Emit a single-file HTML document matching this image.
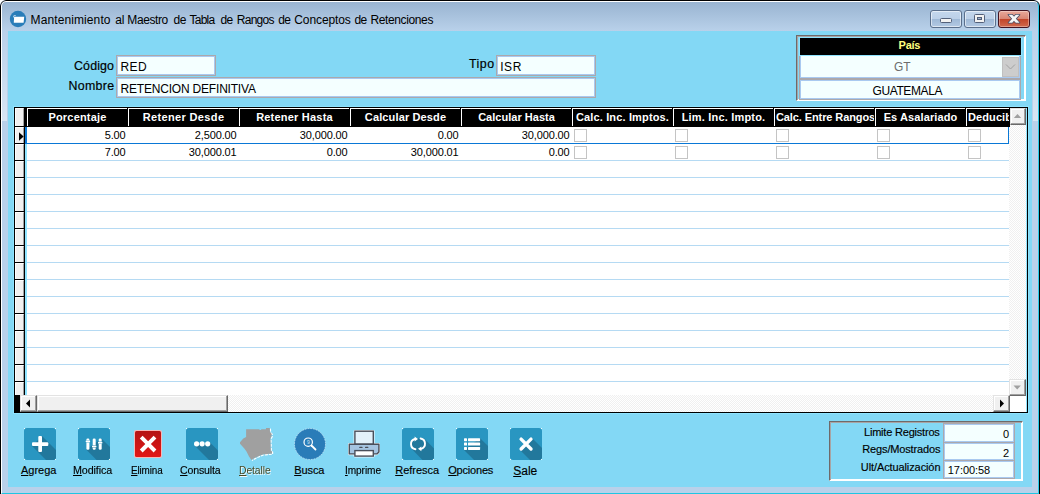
<!DOCTYPE html>
<html lang="es"><head><meta charset="utf-8"><title>Mantenimiento al Maestro de Tabla de Rangos de Conceptos de Retenciones</title>
<style>
*{box-sizing:border-box;margin:0;padding:0}
html,body{width:1040px;height:494px;overflow:hidden;background:#fff}
body{font-family:"Liberation Sans",sans-serif;font-size:12px;color:#000;position:relative}
.a{position:absolute}
.t{position:absolute;white-space:nowrap;line-height:16px;height:16px}
#win{left:0;top:0;width:1040px;height:495px;border-radius:6px 6px 0 0;background:#b9d1ea;overflow:hidden}
#win .ob{left:0;top:0;width:1040px;height:495px;border:1px solid #000;border-radius:6px 6px 0 0}
#win .hl{left:1px;top:1px;width:1038px;height:493px;border-radius:5px 5px 0 0;border-top:1px solid #fff;border-left:1px solid #fff;border-right:1px solid #2bcbe8;border-bottom:1px solid #1fc6e3}
#cap{left:2px;top:2px;width:1036px;height:29px;background:linear-gradient(#99b4d1,#b9d1ea)}
.side{top:31px;width:5px;height:90px;background:linear-gradient(rgba(255,255,255,0),rgba(255,255,255,.45))}
#title{left:0;top:12px;font-size:12px;color:#000}
#client{left:8px;top:31px;width:1024px;height:456px;background:#83d8f5}
.cb{top:10px;height:18px;width:32px;border:1px solid #5a6f8c;border-radius:3px;background:linear-gradient(#c4d7ed 0%,#bcd0e8 48%,#9fb9d7 52%,#b3c9e3 100%);box-shadow:inset 0 0 0 1px rgba(255,255,255,.55)}
.cb.x{border-color:#431422;background:linear-gradient(#e9a99b 0%,#d98775 48%,#c2452a 52%,#d0694e 100%);box-shadow:inset 0 0 0 1px rgba(255,255,255,.35)}
.fld{background:#f4ffff;border:1px solid #aba8ac;box-shadow:inset 0 0 0 1px #a9c9f0}
.l{font-size:12.4px;-webkit-text-stroke:.18px #000}
.k{-webkit-text-stroke:.15px #000}
.hd{top:108px;height:18px;background:#000;border-left:1px solid #fff;border-top:1px solid #fff;overflow:hidden}
.hd span{position:absolute;left:0;right:0;top:0;color:#fff;font-weight:bold;font-size:11px;text-align:center;white-space:nowrap;line-height:16px}
.cell{font-size:11px;text-align:right;white-space:nowrap;height:16px;line-height:16px;letter-spacing:-.12px;padding-right:.4px}
.gl{left:27px;width:982px;height:1px;background:#b5daf3}
.rs{left:15px;width:9px;height:16px;background:#f0f0f0;border-top:1px solid #fff;border-left:1px solid #fff;border-right:1px solid #a0a0a0}
.chk{width:13px;height:13px;background:#fff;border:1px solid #c4c4c4}
.sbb{width:17px;height:17px;background:#f0f0f0;border-top:1px solid #e3e3e3;border-left:1px solid #e3e3e3;border-right:1px solid #696969;border-bottom:1px solid #696969;box-shadow:inset -1px -1px 0 #a0a0a0,inset 1px 1px 0 #fff}
.track{background:conic-gradient(#fff 25%,#f0f0f0 0 50%,#fff 0 75%,#f0f0f0 0) 0 0/2px 2px}
.btnl{top:463px;font-size:12px;text-align:center;width:60px}
.ico{top:428px;width:32px;height:32px}
.pn{border:1px solid;border-color:#6e6a6a #fff #fff #6e6a6a;box-shadow:inset 1px 1px 0 #a8a4a4,inset -1px -1px 0 #fff}
</style></head><body>
<div id="win" class="a">
<div id="cap" class="a"></div>
<div class="side a" style="left:2px"></div>
<div class="side a" style="left:1033px"></div>
<div class="hl a"></div>
<div class="ob a"></div>
<svg class="a" style="left:9px;top:10px" width="18" height="18" viewBox="0 0 18 18"><circle cx="9" cy="9" r="8.200" fill="#2a7db9"/><path d="M4.600 7.400V6.300Q4.600 5.600 5.300 5.600H6.700" fill="none" stroke="#d6e8f5" stroke-width=".9"/><path d="M5.100 6.700H15.200L14.600 12.800H4.800z" fill="#fff"/></svg>
<div id="title" class="a"><span class="t" style="left:30.6px;letter-spacing:0.1px">Mantenimiento</span> <span class="t" style="left:115.2px;letter-spacing:-0.07px">al</span> <span class="t" style="left:127.3px;letter-spacing:-0.4px">Maestro</span> <span class="t" style="left:173.6px;letter-spacing:-0.6px">de</span> <span class="t" style="left:189.6px;letter-spacing:-0.78px">Tabla</span> <span class="t" style="left:220.4px;letter-spacing:-0.6px">de</span> <span class="t" style="left:236.7px;letter-spacing:-0.7px">Rangos</span> <span class="t" style="left:278.3px;letter-spacing:-0.7px">de</span> <span class="t" style="left:294.3px;letter-spacing:-0.1px">Conceptos</span> <span class="t" style="left:354.4px;letter-spacing:-0.6px">de</span> <span class="t" style="left:370.5px;letter-spacing:-0.38px">Retenciones</span></div>
<div class="cb a" style="left:930px"></div>
<div class="cb a" style="left:964px"></div>
<div class="cb x a" style="left:998px"></div>
<svg class="a" style="left:930px;top:10px" width="102" height="18" viewBox="0 0 102 18">
<rect x="10.5" y="8.5" width="11" height="4" rx="1" fill="#f2f2f2" stroke="#53607a"/>
<rect x="44.500" y="4.500" width="10" height="8" rx="1" fill="#f2f2f2" stroke="#53607a"/>
<rect x="47.500" y="7.500" width="4" height="2" fill="#9db3cf" stroke="#53607a"/>
<g transform="translate(78.500 4.700)"><g fill="#4b4f66" stroke="#4b4f66" stroke-width="1.600" stroke-linejoin="round"><path d="M0 0h3.700l7.300 8H7.300z"/><path d="M7.300 0H11L3.700 8H0z"/></g><g fill="#f6f6f6"><path d="M0 0h3.700l7.300 8H7.300z"/><path d="M7.300 0H11L3.700 8H0z"/></g></g>
</svg>
<div id="client" class="a"></div>
<div class="t l" style="left:74px;top:58px;letter-spacing:.15px">Código</div>
<div class="fld a" style="left:116px;top:55px;width:100px;height:21px"></div>
<div class="t" style="left:120.4px;top:59px;letter-spacing:.5px">RED</div>
<div class="t l" style="left:68.5px;top:78px;letter-spacing:.3px">Nombre</div>
<div class="fld a" style="left:116px;top:77px;width:480px;height:21px"></div>
<div class="t" style="left:120.6px;top:81px;letter-spacing:-.2px">RETENCION DEFINITIVA</div>
<div class="t l" style="left:469px;top:56px;letter-spacing:.5px">Tipo</div>
<div class="fld a" style="left:496px;top:55px;width:100px;height:21px"></div>
<div class="t" style="left:500.2px;top:59px;letter-spacing:.6px">ISR</div>
<div class="pn a" style="left:796px;top:35px;width:230px;height:66px"></div>
<div class="fld a" style="left:799px;top:54px;width:222px;height:25px"></div>
<div class="a" style="left:800px;top:38px;width:221px;height:17px;background:#000;box-shadow:0 0 0 1px #8fe4ff"></div>
<div class="t" style="left:898.6px;top:37px;color:#ffff80;font-weight:bold;font-size:11px;letter-spacing:-.3px">País</div>
<div class="t" style="left:894px;top:59px;color:#6d6d6d">GT</div>
<div class="a" style="left:1002px;top:57px;width:17px;height:20px;background:#cdcdcd;border:1px solid #c0c0c0"></div>
<svg class="a" style="left:1002px;top:57px" width="17" height="20" viewBox="0 0 17 20"><path d="M4 7.500l4.500 4.500 4.500-4.500" fill="none" stroke="#a2a2a2" stroke-width="1"/></svg>
<div class="fld a" style="left:799px;top:79px;width:222px;height:21px"></div>
<div class="t" style="left:872.5px;top:83px;letter-spacing:-.4px">GUATEMALA</div>
<div class="a" style="left:14px;top:107px;width:1014px;height:306px;background:#000;box-shadow:0 0 0 1px #8fe4ff"></div>
<div class="a" style="left:25px;top:127px;width:984px;height:268px;background:#fff;border-left:2px solid #8fe4ff"></div>
<div class="rs a" style="top:108px;height:18px"></div>
<div class="rs a" style="top:127px;height:16px"></div>
<div class="rs a" style="top:144px;height:16px"></div>
<div class="rs a" style="top:161px;height:16px"></div>
<div class="rs a" style="top:178px;height:16px"></div>
<div class="rs a" style="top:195px;height:16px"></div>
<div class="rs a" style="top:212px;height:16px"></div>
<div class="rs a" style="top:229px;height:16px"></div>
<div class="rs a" style="top:246px;height:16px"></div>
<div class="rs a" style="top:263px;height:16px"></div>
<div class="rs a" style="top:280px;height:16px"></div>
<div class="rs a" style="top:297px;height:16px"></div>
<div class="rs a" style="top:314px;height:16px"></div>
<div class="rs a" style="top:331px;height:16px"></div>
<div class="rs a" style="top:348px;height:16px"></div>
<div class="rs a" style="top:365px;height:16px"></div>
<div class="rs a" style="top:382px;height:13px"></div>
<div class="hd a" style="left:27px;width:100px"><span style="letter-spacing:0.2px">Porcentaje</span></div>
<div class="hd a" style="left:128px;width:110px"><span style="letter-spacing:0.36px">Retener Desde</span></div>
<div class="hd a" style="left:239px;width:110px"><span style="letter-spacing:0.21px">Retener Hasta</span></div>
<div class="hd a" style="left:350px;width:110px"><span style="letter-spacing:0.13px">Calcular Desde</span></div>
<div class="hd a" style="left:461px;width:110px"><span style="letter-spacing:0.02px">Calcular Hasta</span></div>
<div class="hd a" style="left:572px;width:100px"><span style="letter-spacing:0.15px">Calc. Inc. Imptos.</span></div>
<div class="hd a" style="left:673px;width:100px"><span style="letter-spacing:0.19px">Lim. Inc. Impto.</span></div>
<div class="hd a" style="left:774px;width:100px"><span style="text-align:left;left:1px;letter-spacing:-0.1px">Calc. Entre Rangos</span></div>
<div class="hd a" style="left:875px;width:90px"><span style="letter-spacing:0.1px">Es Asalariado</span></div>
<div class="hd a" style="left:966px;width:43px"><span style="text-align:left;left:1px;letter-spacing:0.1px">Deducible</span></div>
<div class="gl a" style="top:143px"></div>
<div class="gl a" style="top:160px"></div>
<div class="gl a" style="top:177px"></div>
<div class="gl a" style="top:194px"></div>
<div class="gl a" style="top:211px"></div>
<div class="gl a" style="top:228px"></div>
<div class="gl a" style="top:245px"></div>
<div class="gl a" style="top:262px"></div>
<div class="gl a" style="top:279px"></div>
<div class="gl a" style="top:296px"></div>
<div class="gl a" style="top:313px"></div>
<div class="gl a" style="top:330px"></div>
<div class="gl a" style="top:347px"></div>
<div class="gl a" style="top:364px"></div>
<div class="gl a" style="top:381px"></div>
<div class="cell a" style="left:27px;top:127px;width:99px">5.00</div>
<div class="cell a" style="left:128px;top:127px;width:109px">2,500.00</div>
<div class="cell a" style="left:239px;top:127px;width:109px">30,000.00</div>
<div class="cell a" style="left:350px;top:127px;width:109px">0.00</div>
<div class="cell a" style="left:461px;top:127px;width:109px">30,000.00</div>
<div class="chk a" style="left:574px;top:129px"></div>
<div class="chk a" style="left:675px;top:129px"></div>
<div class="chk a" style="left:776px;top:129px"></div>
<div class="chk a" style="left:877px;top:129px"></div>
<div class="chk a" style="left:968px;top:129px"></div>
<div class="cell a" style="left:27px;top:144px;width:99px">7.00</div>
<div class="cell a" style="left:128px;top:144px;width:109px">30,000.01</div>
<div class="cell a" style="left:239px;top:144px;width:109px">0.00</div>
<div class="cell a" style="left:350px;top:144px;width:109px">30,000.01</div>
<div class="cell a" style="left:461px;top:144px;width:109px">0.00</div>
<div class="chk a" style="left:574px;top:146px"></div>
<div class="chk a" style="left:675px;top:146px"></div>
<div class="chk a" style="left:776px;top:146px"></div>
<div class="chk a" style="left:877px;top:146px"></div>
<div class="chk a" style="left:968px;top:146px"></div>
<div class="a" style="left:25px;top:127px;width:984px;height:17px;border:1px solid #0a78d6;border-left-width:2px;border-top:0"></div>
<svg class="a" style="left:15px;top:127px" width="10" height="17" viewBox="0 0 10 17"><path d="M4 5.300v8.400l4.600-4.200z" fill="#000"/></svg>
<div class="track a" style="left:1010px;top:108px;width:16px;height:19px"></div><div class="track a" style="left:1009px;top:127px;width:17px;height:268px"></div>
<div class="sbb a" style="left:1010px;top:108px;width:16px"></div>
<div class="sbb a" style="left:1009px;top:379px;height:17px;width:17px"></div>
<svg class="a" style="left:1010px;top:108px" width="17" height="17" viewBox="0 0 17 17"><path d="M3.800 10h7.400l-3.700-4z" fill="#a0a0a0"/></svg>
<svg class="a" style="left:1009px;top:379px" width="17" height="17" viewBox="0 0 17 17"><path d="M4.500 6.500h7.400l-3.700 4z" fill="#a0a0a0"/></svg>
<div class="track a" style="left:20px;top:395px;width:990px;height:17px"></div>
<div class="sbb a" style="left:20px;top:395px"></div>
<div class="sbb a" style="left:37px;top:395px;width:191px"></div>
<div class="sbb a" style="left:993px;top:395px"></div>
<svg class="a" style="left:20px;top:395px" width="17" height="17" viewBox="0 0 17 17"><path d="M10 4.500v8l-4-4z" fill="#000"/></svg>
<svg class="a" style="left:993px;top:395px" width="17" height="17" viewBox="0 0 17 17"><path d="M7 4.500v8l4-4z" fill="#000"/></svg>
<div class="a" style="left:1010px;top:396px;width:16px;height:16px;background:#fff"></div>
<div class="a" style="left:1026px;top:108px;width:1px;height:304px;background:#92e6ff"></div>
<svg class="ico a" style="left:24px" viewBox="0 0 32 32"><rect width="32" height="32" rx="3" fill="#2996c1"/><path d="M18 8L32 22V29a3 3 0 0 1-3 3H22L8 18z" fill="#22789c"/><g fill="#fff"><rect x="8" y="14.200" width="16.300" height="3.700" rx="1"/><rect x="14.300" y="8" width="3.700" height="16" rx="1"/></g><g fill="#fff" opacity=".9"><rect x="0" y="0" width="1" height="1"/><rect x="31" y="0" width="1" height="1"/><rect x="0" y="31" width="1" height="1"/><rect x="31" y="31" width="1" height="1"/></g></svg>
<svg class="ico a" style="left:78px" viewBox="0 0 32 32"><rect width="32" height="32" rx="3" fill="#2996c1"/><path d="M23.500 10.400L32 18.900V29a3 3 0 0 1-3 3H18.600L8.400 21.700z" fill="#22789c"/><g fill="#fff"><rect x="8.400" y="10.400" width="3" height="11.300" rx="1.300"/><rect x="14.700" y="10.400" width="3" height="11.300" rx="1.300"/><rect x="20.700" y="10.400" width="3" height="11.300" rx="1.300"/></g><g fill="#2996c1"><rect x="8" y="12.100" width="3.800" height="2.600" opacity=".7"/><rect x="20.300" y="13.400" width="3.800" height="2.600" opacity=".7"/></g><g fill="#22789c"><rect x="14.300" y="17.200" width="3.800" height="2.600" opacity=".7"/></g><g fill="#fff"><rect x="7.700" y="12.600" width="4.400" height="1.600" rx=".4"/><rect x="14" y="17.700" width="4.400" height="1.600" rx=".4"/><rect x="20" y="13.900" width="4.400" height="1.600" rx=".4"/></g><g fill="#fff" opacity=".9"><rect x="0" y="0" width="1" height="1"/><rect x="31" y="0" width="1" height="1"/><rect x="0" y="31" width="1" height="1"/><rect x="31" y="31" width="1" height="1"/></g></svg>
<div class="a" style="left:134px;top:430px;width:28px;height:28px;border-radius:2px;background:#f3b9b9"></div><div class="a" style="left:134.600px;top:430.600px;width:26.800px;height:26.800px;border-radius:1.500px;background:linear-gradient(#b41414,#e21616)"></div><svg class="ico a" style="left:132px" viewBox="0 0 32 32"><path d="M7.800 10.600l2.800-2.800 5.500 5.500 5.500-5.500 2.800 2.800-5.500 5.500 5.500 5.500-2.800 2.800-5.500-5.500-5.500 5.500-2.800-2.800 5.500-5.500z" fill="#fff"/></svg>
<svg class="ico a" style="left:186px" viewBox="0 0 32 32"><rect width="32" height="32" rx="3" fill="#2996c1"/><path d="M23.500 14L32 22.500V29a3 3 0 0 1-3 3H23L8.800 17.700z" fill="#22789c"/><g fill="#fff"><circle cx="10.600" cy="15.800" r="2.600"/><circle cx="16.100" cy="15.800" r="2.600"/><circle cx="21.700" cy="15.800" r="2.600"/></g><g fill="#fff" opacity=".9"><rect x="0" y="0" width="1" height="1"/><rect x="31" y="0" width="1" height="1"/><rect x="0" y="31" width="1" height="1"/><rect x="31" y="31" width="1" height="1"/></g></svg>
<svg class="ico a" style="left:240px;overflow:visible" viewBox="0 0 32 32"><path d="M30.400000000000002 0.6L30.6 4.699999999999999L32.2 6.3L32.2 8.7L31.0 11.2L31.400000000000002 23.3L32.6 24.1L32.6 26.200000000000003L23.3 27.0L18.5 29.0L15.2 30.6L12.0 32.6" fill="none" stroke="#fff" stroke-width="1.200" stroke-dasharray="3 1"/><path d="M6.1 1.3L19.5 1.3L19.5 2.1L21.1 2.1L21.1 1.3L26 1.3L26 0L29.8 0L30 4.1L31.6 5.7L31.6 8.1L30.4 10.6L30.8 22.7L32 23.5L32 25.6L22.7 26.4L17.9 28.4L14.6 30L11.4 32L9 28.4L6.5 23.5L4.1 20.3L0 15.8L0 14.2L3.3 10.6L6.1 9z" fill="#a0a0a0"/></svg>
<svg class="ico a" style="left:294px" viewBox="0 0 32 32"><circle cx="16" cy="16" r="15.500" fill="#2a7cb8" stroke="#d9eefa" stroke-width=".7" stroke-dasharray="1.600 1.100"/><circle cx="14.200" cy="14.200" r="4.200" fill="none" stroke="#fff" stroke-width="1.200"/><path d="M17.500 17.500l4 4" stroke="#fff" stroke-width="1.800" stroke-linecap="round"/><text x="14.300" y="16" font-size="5" font-family="Liberation Sans,sans-serif" fill="#cfe3f1" text-anchor="middle">9</text></svg>
<svg class="ico a" style="left:348px" viewBox="0 0 32 32"><g stroke="#eef6fb" stroke-width="2.600" fill="none" stroke-linejoin="round"><rect x="6.900" y="3.200" width="18.400" height="13"/><path d="M1.300 16.200h29.600v7.700l-2 2H1.300z"/><rect x="6.900" y="22.600" width="18.400" height="5.500"/></g><rect x="6.900" y="3.200" width="18.400" height="13" fill="#e3f1fa" stroke="#4a4f5a" stroke-width="1.400"/><path d="M1.300 16.200h29.600v7.700l-2 2H1.300z" fill="#a5c4e1" stroke="#4a4f5a" stroke-width="1.400" stroke-linejoin="round"/><rect x="6.900" y="22.600" width="18.400" height="5.500" fill="#fff" stroke="#4a4f5a" stroke-width="1.400"/><rect x="11.200" y="18.700" width="3.400" height="1.300" rx=".6" fill="#4a4f5a"/><rect x="17" y="18.700" width="3.400" height="1.300" rx=".6" fill="#4a4f5a"/></svg>
<svg class="ico a" style="left:402px" viewBox="0 0 32 32"><rect width="32" height="32" rx="3" fill="#2996c1"/><path d="M21.700 10.100L32 20.400V29a3 3 0 0 1-3 3H20.500L10.300 21.500z" fill="#22789c"/><ellipse cx="16" cy="15.900" rx="6.800" ry="5.600" fill="#22789c"/><path d="M13.400 21.300A5.300 5.300 0 0 1 12.800 11" fill="none" stroke="#fff" stroke-width="1.900" stroke-linecap="round"/><path d="M12.600 8.600L16 11L12.600 13.400z" fill="#fff"/><g transform="rotate(180 16 15.900)"><path d="M13.400 21.300A5.300 5.300 0 0 1 12.800 11" fill="none" stroke="#fff" stroke-width="1.900" stroke-linecap="round"/><path d="M12.600 8.600L16 11L12.600 13.400z" fill="#fff"/></g><g fill="#fff" opacity=".9"><rect x="0" y="0" width="1" height="1"/><rect x="31" y="0" width="1" height="1"/><rect x="0" y="31" width="1" height="1"/><rect x="31" y="31" width="1" height="1"/></g></svg>
<svg class="ico a" style="left:456px" viewBox="0 0 32 32"><rect width="32" height="32" rx="3" fill="#2996c1"/><path d="M24.100 10.200L32 18.100V29a3 3 0 0 1-3 3H18.100L8 21.900z" fill="#22789c"/><g fill="#fff"><rect x="8" y="10.200" width="3" height="3" rx=".6"/><rect x="12" y="10.200" width="12.100" height="3" rx=".6"/><rect x="8" y="14.500" width="3" height="3" rx=".6"/><rect x="12" y="14.500" width="12.100" height="3" rx=".6"/><rect x="8" y="18.900" width="3" height="3" rx=".6"/><rect x="12" y="18.900" width="12.100" height="3" rx=".6"/></g><g fill="#fff" opacity=".9"><rect x="0" y="0" width="1" height="1"/><rect x="31" y="0" width="1" height="1"/><rect x="0" y="31" width="1" height="1"/><rect x="31" y="31" width="1" height="1"/></g></svg>
<svg class="ico a" style="left:510px" viewBox="0 0 32 32"><rect width="32" height="32" rx="3" fill="#2996c1"/><path d="M22 10L32 20V29a3 3 0 0 1-3 3H20L10 22z" fill="#22789c"/><path d="M11.100 11.100L21 21M21 11.100L11.100 21" stroke="#fff" stroke-width="3.400" stroke-linecap="round" fill="none"/><g fill="#fff" opacity=".9"><rect x="0" y="0" width="1" height="1"/><rect x="31" y="0" width="1" height="1"/><rect x="0" y="31" width="1" height="1"/><rect x="31" y="31" width="1" height="1"/></g></svg>
<div class="t k" style="left:21.0px;top:462px;font-size:11px;letter-spacing:0px;"><u>A</u>grega</div>
<div class="t k" style="left:73.2px;top:462px;font-size:11px;letter-spacing:-0.1px;transform:scaleX(0.975);transform-origin:0 0;"><u>M</u>odifica</div>
<div class="t k" style="left:131.2px;top:462px;font-size:11px;letter-spacing:-0.15px;transform:scaleX(0.9);transform-origin:0 0;"><u>E</u>limina</div>
<div class="t k" style="left:180.2px;top:462px;font-size:11px;letter-spacing:-0.15px;transform:scaleX(0.96);transform-origin:0 0;"><u>C</u>onsulta</div>
<div class="t" style="left:239.2px;top:462px;font-size:11px;letter-spacing:-0.1px;color:#4a4a26;text-shadow:1px 1px 0 rgba(255,255,255,.85);transform:scaleX(0.94);transform-origin:0 0;"><u>D</u>etalle</div>
<div class="t k" style="left:294.2px;top:462px;font-size:11px;letter-spacing:-0.09px;"><u>B</u>usca</div>
<div class="t k" style="left:345.2px;top:462px;font-size:11px;letter-spacing:-0.1px;transform:scaleX(0.92);transform-origin:0 0;"><u>I</u>mprime</div>
<div class="t k" style="left:395.2px;top:462px;font-size:11px;letter-spacing:-0.02px;"><u>R</u>efresca</div>
<div class="t k" style="left:448.2px;top:462px;font-size:11px;letter-spacing:-0.19px;"><u>O</u>pciones</div>
<div class="t k" style="left:513.2px;top:463px;font-size:12px;letter-spacing:0px;"><u>S</u>ale</div>
<div class="pn a" style="left:829px;top:421px;width:194px;height:60px"></div>
<div class="t k" style="left:864px;top:424px;font-size:11px;letter-spacing:-.2px">Limite Registros</div>
<div class="t k" style="left:862.3px;top:441px;font-size:11px;letter-spacing:-.15px">Regs/Mostrados</div>
<div class="t k" style="left:860.8px;top:459px;font-size:11px;letter-spacing:-.1px">Ult/Actualización</div>
<div class="fld a" style="left:943px;top:460px;width:72px;height:19px"></div>
<div class="fld a" style="left:943px;top:442px;width:72px;height:19px"></div>
<div class="fld a" style="left:943px;top:423px;width:72px;height:20px"></div>
<div class="t" style="left:944px;top:426px;width:65px;font-size:11px;text-align:right">0</div>
<div class="t" style="left:944px;top:445px;width:65px;font-size:11px;text-align:right">2</div>
<div class="t" style="left:947.8px;top:462px;font-size:11px;letter-spacing:-.07px">17:00:58</div>
</div></body></html>
